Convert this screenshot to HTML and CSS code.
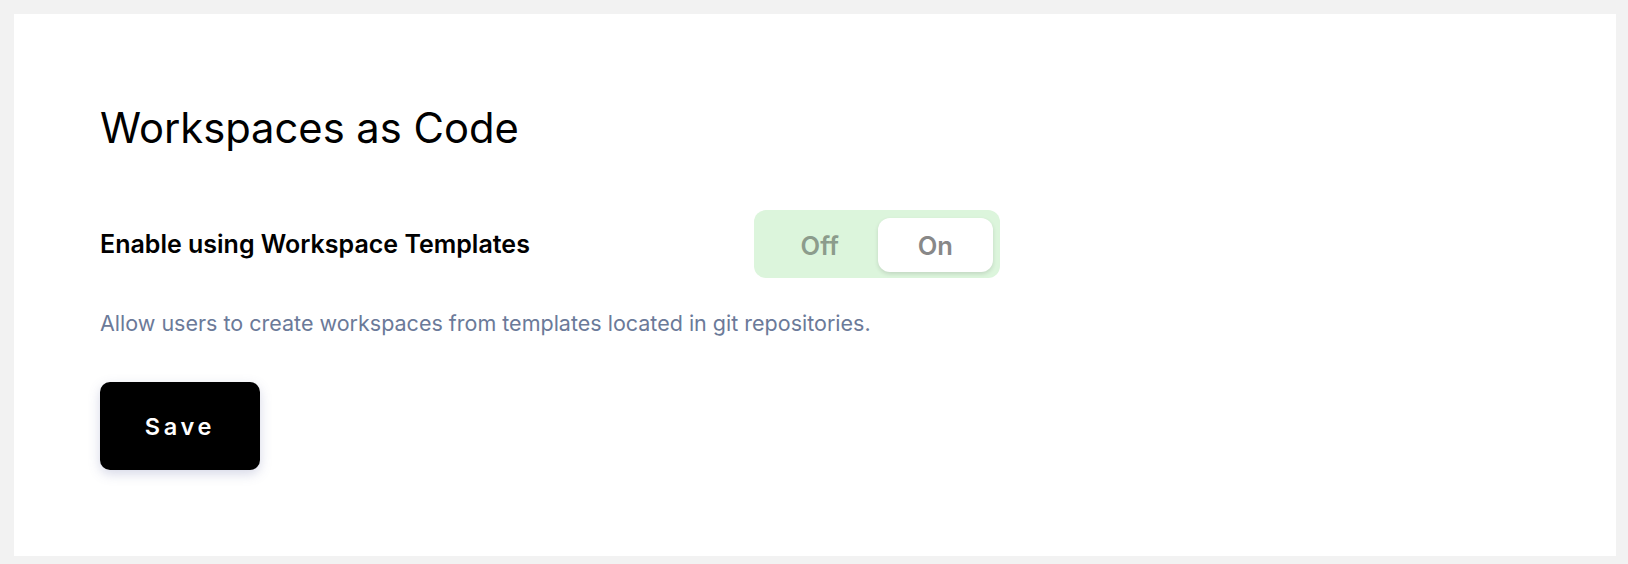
FILE: index.html
```html
<!DOCTYPE html>
<html>
<head>
<meta charset="utf-8">
<link rel="stylesheet" href="styles.css">
</head>
<body>
<main class="card">
  <h1 class="title">Workspaces as Code</h1>
  <div class="setting">
    <span class="label">Enable using Workspace Templates</span>
    <div class="toggle">
      <span class="opt">Off</span>
      <span class="opt active">On</span>
    </div>
  </div>
  <p class="desc">Allow users to create workspaces from templates located in git repositories.</p>
  <button class="save">Save</button>
</main>
</body>
</html>
```

FILE: styles.css
```css
html, body {
  margin: 0;
  padding: 0;
}
body {
  background: #f2f2f2;
  font-family: Inter, "Noto Sans", sans-serif;
  padding: 14px 12px 8px 14px;
  height: 564px;
  box-sizing: border-box;
}
.card {
  background: #ffffff;
  height: 542px;
  box-sizing: border-box;
  padding: 88px 86px 0 86px;
  display: flex;
  flex-direction: column;
  align-items: flex-start;
}
.title {
  margin: 0;
  font-size: 41.7px;
  font-weight: 400;
  line-height: 52px;
  color: #000;
}
.setting {
  display: flex;
  align-items: center;
  margin-top: 56px;
}
.label {
  font-size: 25px;
  font-weight: 600;
  color: #000;
  width: 654px;
}
.toggle {
  display: flex;
  align-items: center;
  width: 246px;
  height: 68px;
  box-sizing: border-box;
  padding: 8px 7px 6px 8px;
  background: #dcf5dc;
  border-radius: 12px;
}
.opt {
  flex: 1;
  height: 54px;
  display: flex;
  align-items: center;
  justify-content: center;
  font-size: 25.5px;
  font-weight: 600;
  color: #8c9c8c;
}
.opt.active {
  background: #fff;
  color: #888888;
  border-radius: 12px;
  box-shadow: 0 2px 4px rgba(0, 0, 0, 0.12);
}
.desc {
  margin: 31px 0 0 0;
  font-size: 21.5px;
  line-height: 28px;
  color: #6b7a99;
}
.save {
  margin-top: 45px;
  width: 160px;
  height: 88px;
  border: none;
  border-radius: 10px;
  background: #000;
  color: #fff;
  font-family: Inter, "Noto Sans", sans-serif;
  font-size: 23.5px;
  font-weight: 600;
  letter-spacing: 3.7px;
  box-shadow: 0 4px 12px rgba(90, 100, 160, 0.25);
  cursor: pointer;
}
```
